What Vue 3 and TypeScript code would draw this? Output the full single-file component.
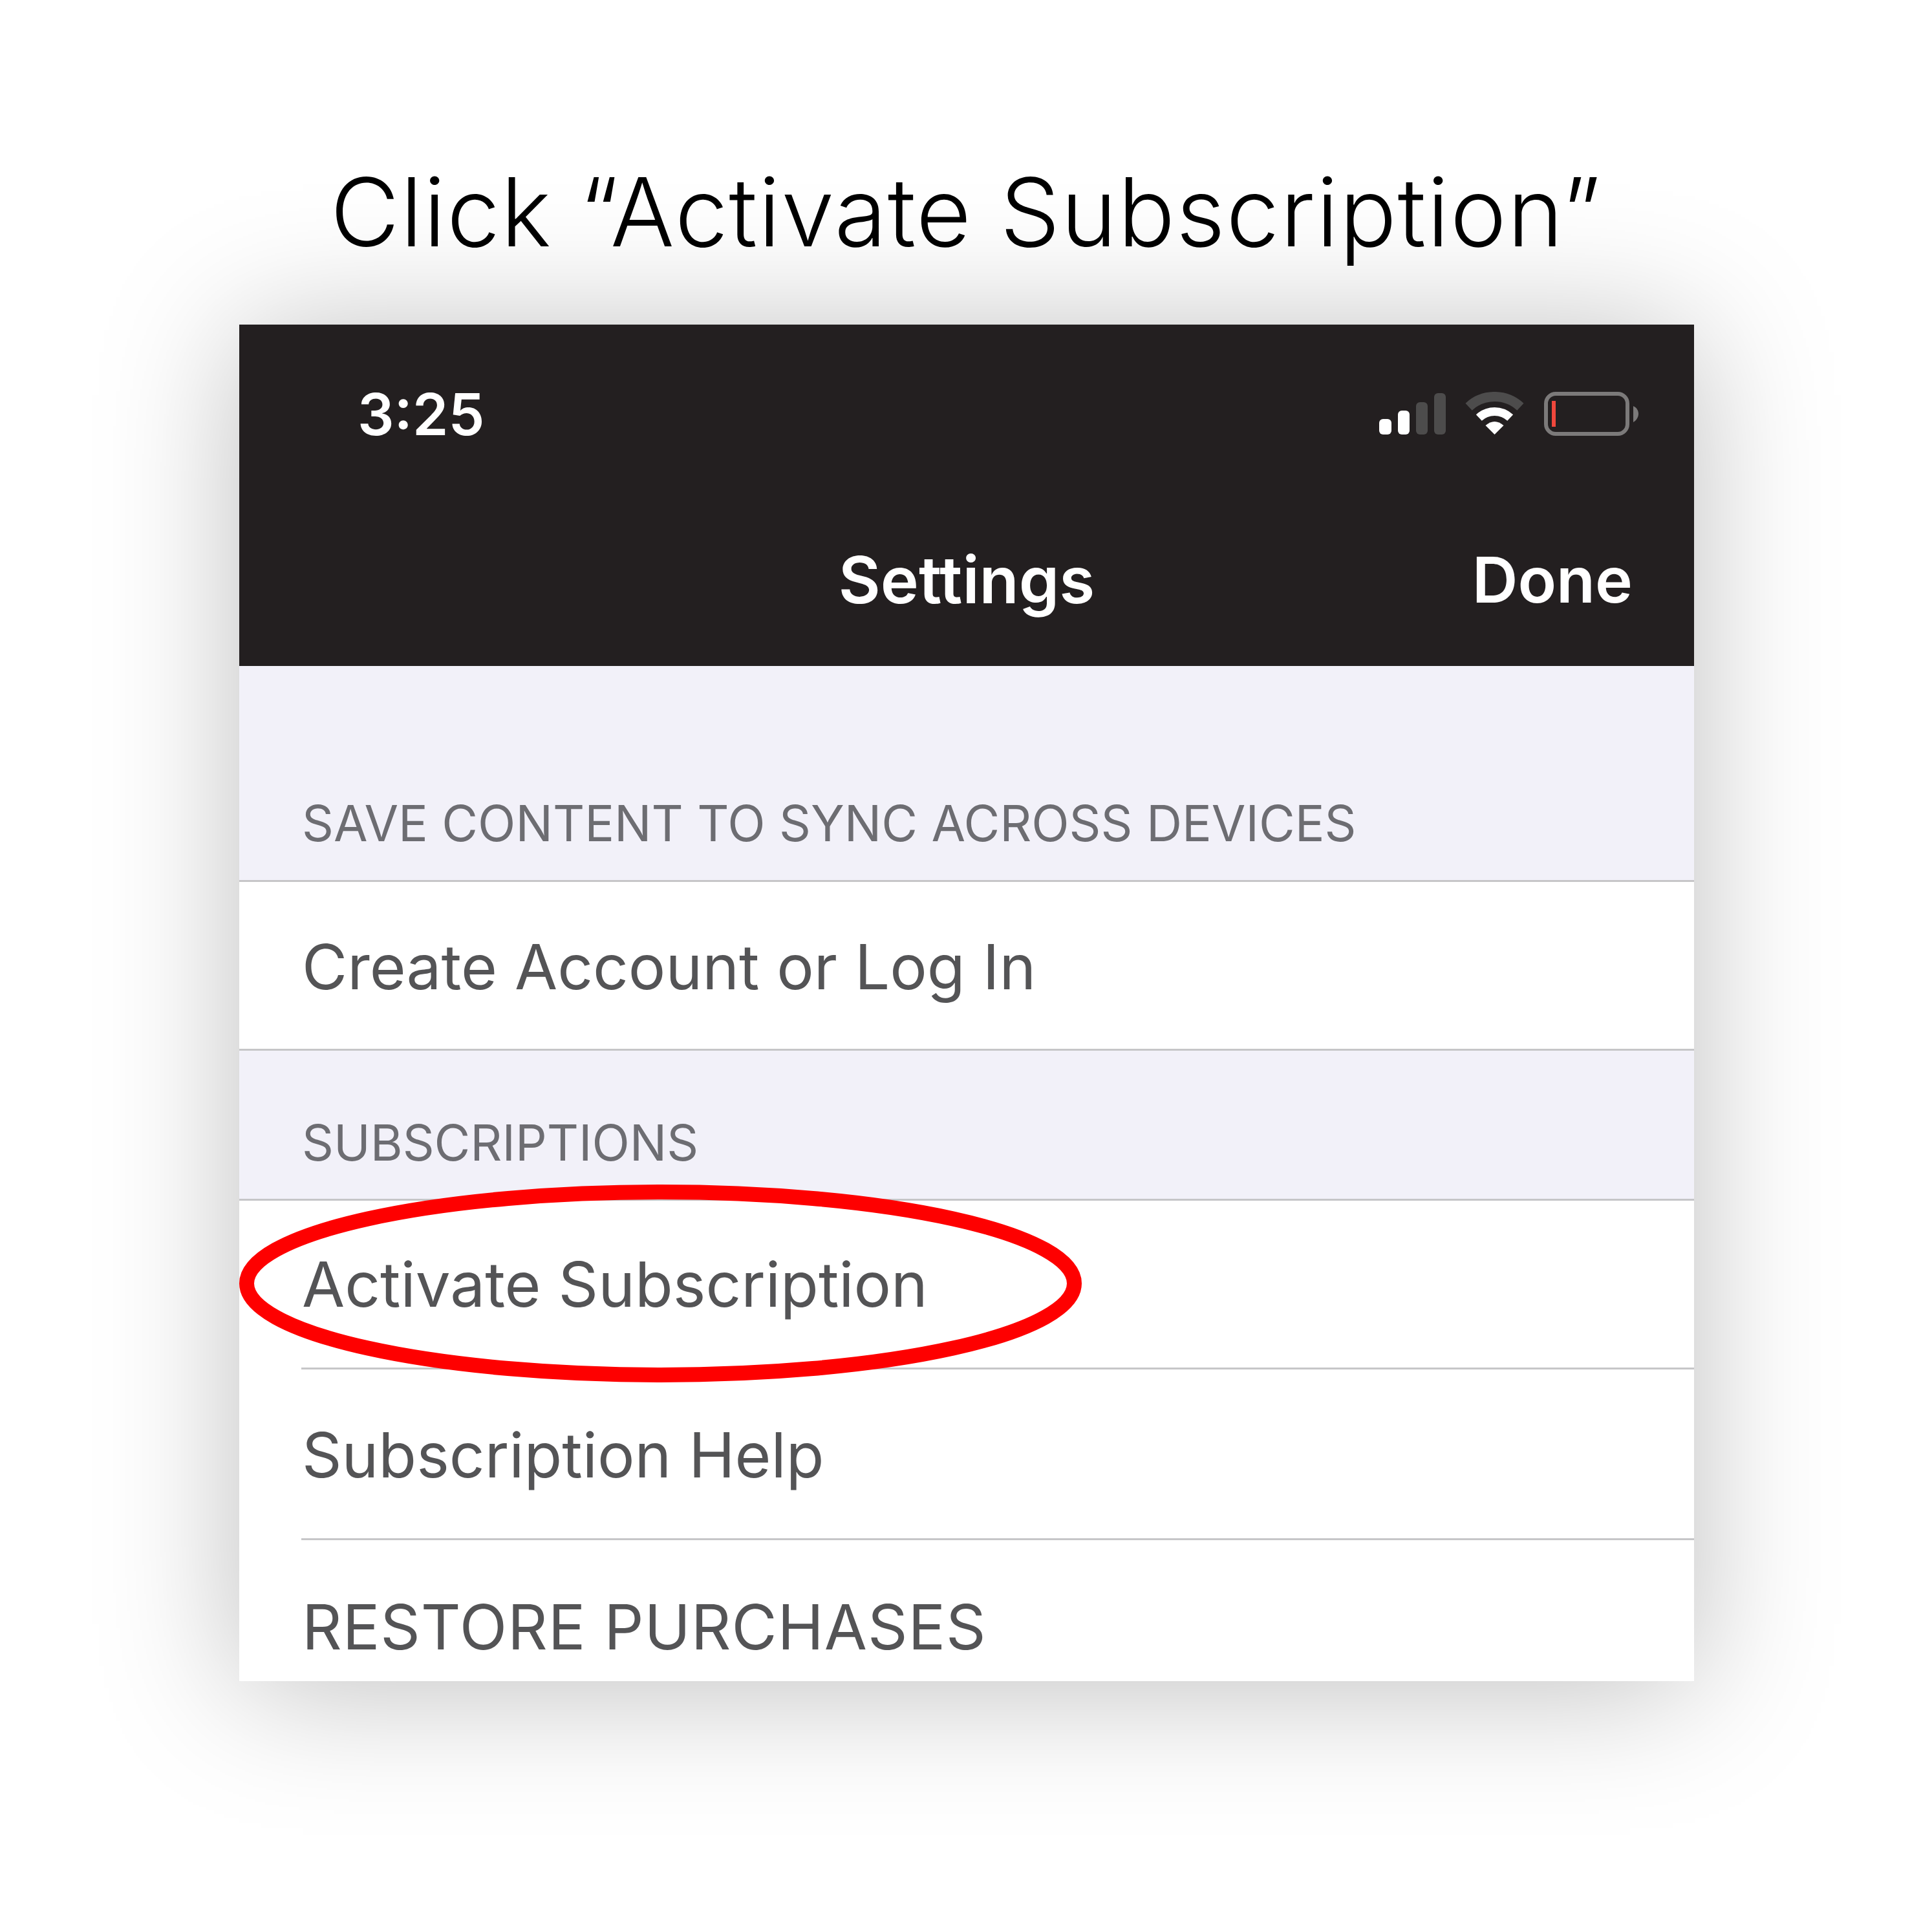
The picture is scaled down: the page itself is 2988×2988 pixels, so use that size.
<template>
  <main class="page">
    <h1 class="title">Click “Activate Subscription”</h1>
    <section class="phone">
      <header class="topbar">
        <div class="status">
          <span class="time">3:25</span>
          <div class="status-icons">
            <svg class="signal" width="103" height="64" viewBox="0 0 103 64">
              <rect x="0" y="40" width="19" height="24" rx="6" fill="#fff" />
              <rect x="29" y="27" width="18" height="37" rx="6" fill="#fff" />
              <rect x="57" y="14" width="18" height="50" rx="6" fill="#4d4c4c" />
              <rect x="85" y="0" width="18" height="64" rx="6" fill="#4d4c4c" />
            </svg>
            <svg class="wifi" width="91" height="66" viewBox="0 0 91 66">
              <path d="M5.6 23.2A58.5 58.5 0 0 1 85.4 23.2" fill="none" stroke="#4d4c4c" stroke-width="15" />
              <path d="M21.3 40A35.5 35.5 0 0 1 69.7 40" fill="none" stroke="#fff" stroke-width="13" />
              <path d="M45.5 66L31.5 52Q45.5 40 59.5 52Z" fill="#fff" />
            </svg>
            <svg class="battery" width="146" height="68" viewBox="0 0 146 68">
              <rect x="3" y="3" width="126" height="62" rx="15" fill="none" stroke="#7c7a7a" stroke-width="6" />
              <rect x="12" y="14" width="6" height="40" fill="#f0473c" />
              <path d="M138 22C143 24 146 29 146 34C146 39 143 44 138 47Z" fill="#7c7a7a" />
            </svg>
          </div>
        </div>
        <nav class="navbar">
          <span class="nav-title">Settings</span>
          <span class="nav-done">Done</span>
        </nav>
      </header>

      <div class="content">
        <div v-for="group in groups" :key="group.title" class="group">
          <div class="group-title" :class="group.cls">{{ group.title }}</div>
          <ul class="rows">
            <li v-for="row in group.rows" :key="row.label" class="row" :class="{ circled: row.circled }">
              <span class="row-label">{{ row.label }}</span>
              <svg v-if="row.circled" class="ring" width="1303" height="306" viewBox="0 0 1303 306">
                <ellipse cx="651.5" cy="153" rx="640" ry="141.5" fill="none" stroke="#fe0000" stroke-width="23" />
              </svg>
            </li>
          </ul>
        </div>
      </div>
    </section>
  </main>
</template>

<script setup lang="ts">
interface Row {
  label: string
  circled?: boolean
}

const groups: { title: string; cls: string; rows: Row[] }[] = [
  {
    title: 'SAVE CONTENT TO SYNC ACROSS DEVICES',
    cls: 'first',
    rows: [{ label: 'Create Account or Log In' }],
  },
  {
    title: 'SUBSCRIPTIONS',
    cls: 'second',
    rows: [
      { label: 'Activate Subscription', circled: true },
      { label: 'Subscription Help' },
      { label: 'RESTORE PURCHASES' },
    ],
  },
]
</script>

<style>
html,
body {
  margin: 0;
  background: #fff;
}
</style>

<style scoped>
.page {
  width: 2988px;
  height: 2988px;
  box-sizing: border-box;
  overflow: hidden;
  background: #fff;
  display: flex;
  flex-direction: column;
  align-items: center;
  padding-top: 238px;
}

.title {
  margin: 0;
  height: 264px;
  font-family: Inter, sans-serif;
  font-weight: 300;
  font-size: 147px;
  letter-spacing: 1.5px;
  line-height: 180px;
  color: #000;
}

.phone {
  width: 2250px;
  height: 2098px;
  overflow: hidden;
  margin-left: 2px;
  display: flex;
  flex-direction: column;
  background: #fff;
  box-shadow: 0 10px 200px rgba(0, 0, 0, 0.26);
  font-family: Inter, sans-serif;
}

.topbar {
  height: 528px;
  flex-shrink: 0;
  background: #231f20;
  color: #fff;
  display: flex;
  flex-direction: column;
}

.status {
  height: 260px;
  display: flex;
  justify-content: space-between;
  align-items: flex-start;
  padding: 104px 86px 0 183px;
  box-sizing: border-box;
}

.time {
  font-size: 89px;
  font-weight: 600;
  line-height: 70px;
}

.status-icons {
  display: flex;
  align-items: flex-end;
  height: 68px;
}

.signal,
.wifi {
  margin-bottom: 2px;
}

.wifi {
  margin-left: 30px;
  margin-right: 31px;
}

.nav-title,
.nav-done {
  font-size: 100px;
  font-weight: 600;
  line-height: 110px;
}

.navbar {
  position: relative;
  display: flex;
  justify-content: center;
  padding-top: 80px;
}

.nav-done {
  position: absolute;
  right: 95px;
  top: 80px;
  font-size: 98px;
}

.content {
  flex: 1;
  background: #f2f1f9;
}

.group-title {
  box-sizing: border-box;
  padding: 0 97px 43px;
  color: #6d6d72;
  font-size: 76.3px;
  line-height: 90px;
  display: flex;
  align-items: flex-end;
}

.group-title.first {
  height: 331px;
}

.group-title.second {
  height: 229px;
  padding-bottom: 42px;
}

.rows {
  list-style: none;
  margin: 0;
  padding: 0;
  background: #fff;
  border-top: 3px solid #c6c6c8;
  border-bottom: 3px solid #c6c6c8;
}

.row {
  position: relative;
  height: 261px;
  box-sizing: border-box;
  margin-left: 96px;
  padding-left: 1px;
  display: flex;
  align-items: center;
  color: #545456;
  font-size: 96px;
  border-bottom: 3px solid #c6c6c8;
}

.row:nth-child(2) {
  height: 264px;
  padding-top: 3px;
}

.row:only-child {
  height: 258px;
  padding-top: 3px;
}

.row:last-child {
  border-bottom: none;
}

.group:last-child .row:last-child {
  height: 268px;
  letter-spacing: 0.9px;
}

.ring {
  position: absolute;
  left: -96px;
  top: -25px;
}
</style>
